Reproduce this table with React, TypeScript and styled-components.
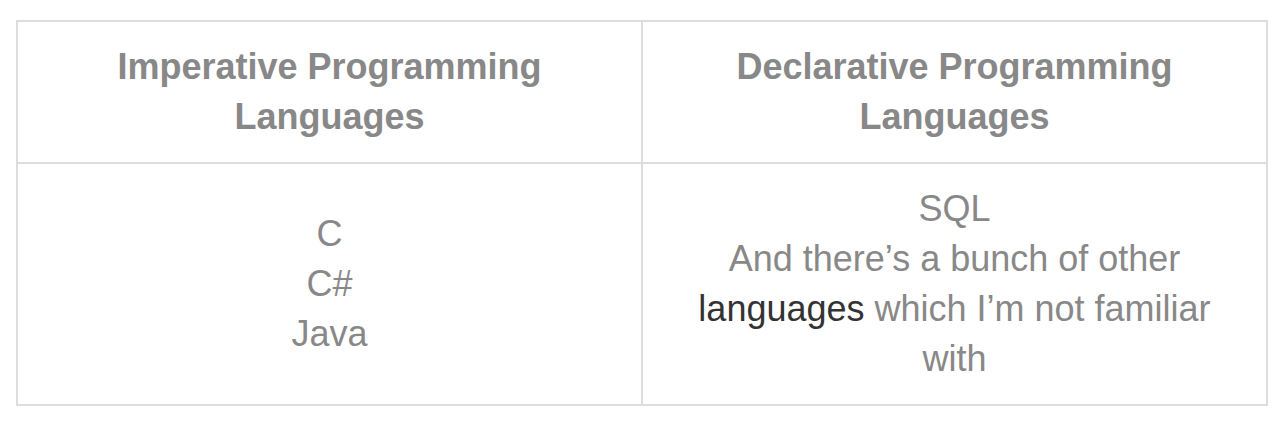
import React from "react";
import styled, { createGlobalStyle } from "styled-components";

const Global = createGlobalStyle`
  html, body { margin: 0; padding: 0; background: #fff; }
  body { font-family: "Liberation Sans", Arial, Helvetica, sans-serif; }
`;

const Page = styled.div`
  padding: 20px 20px 0 16px;
`;

const Table = styled.table`
  width: 1252px;
  border-collapse: collapse;
  table-layout: fixed;
  border: 2px solid #dddddd;
  color: #888888;
  font-size: 36px;
  line-height: 50px;
`;

const Cell = styled.td<{ $head?: boolean }>`
  border: 2px solid #dddddd;
  padding: 20px 40px;
  text-align: center;
  vertical-align: middle;
  font-weight: ${(p) => (p.$head ? 700 : 400)};
`;

const Link = styled.span`
  color: #333333;
`;

export default function App() {
  return (
    <>
      <Global />
      <Page>
        <Table>
          <tbody>
            <tr>
              <Cell as="th" $head>
                Imperative Programming Languages
              </Cell>
              <Cell as="th" $head>
                Declarative Programming Languages
              </Cell>
            </tr>
            <tr>
              <Cell>
                C<br />
                C#
                <br />
                Java
              </Cell>
              <Cell>
                SQL
                <br />
                And there’s a bunch of other <Link>languages</Link> which I’m not familiar with
              </Cell>
            </tr>
          </tbody>
        </Table>
      </Page>
    </>
  );
}
